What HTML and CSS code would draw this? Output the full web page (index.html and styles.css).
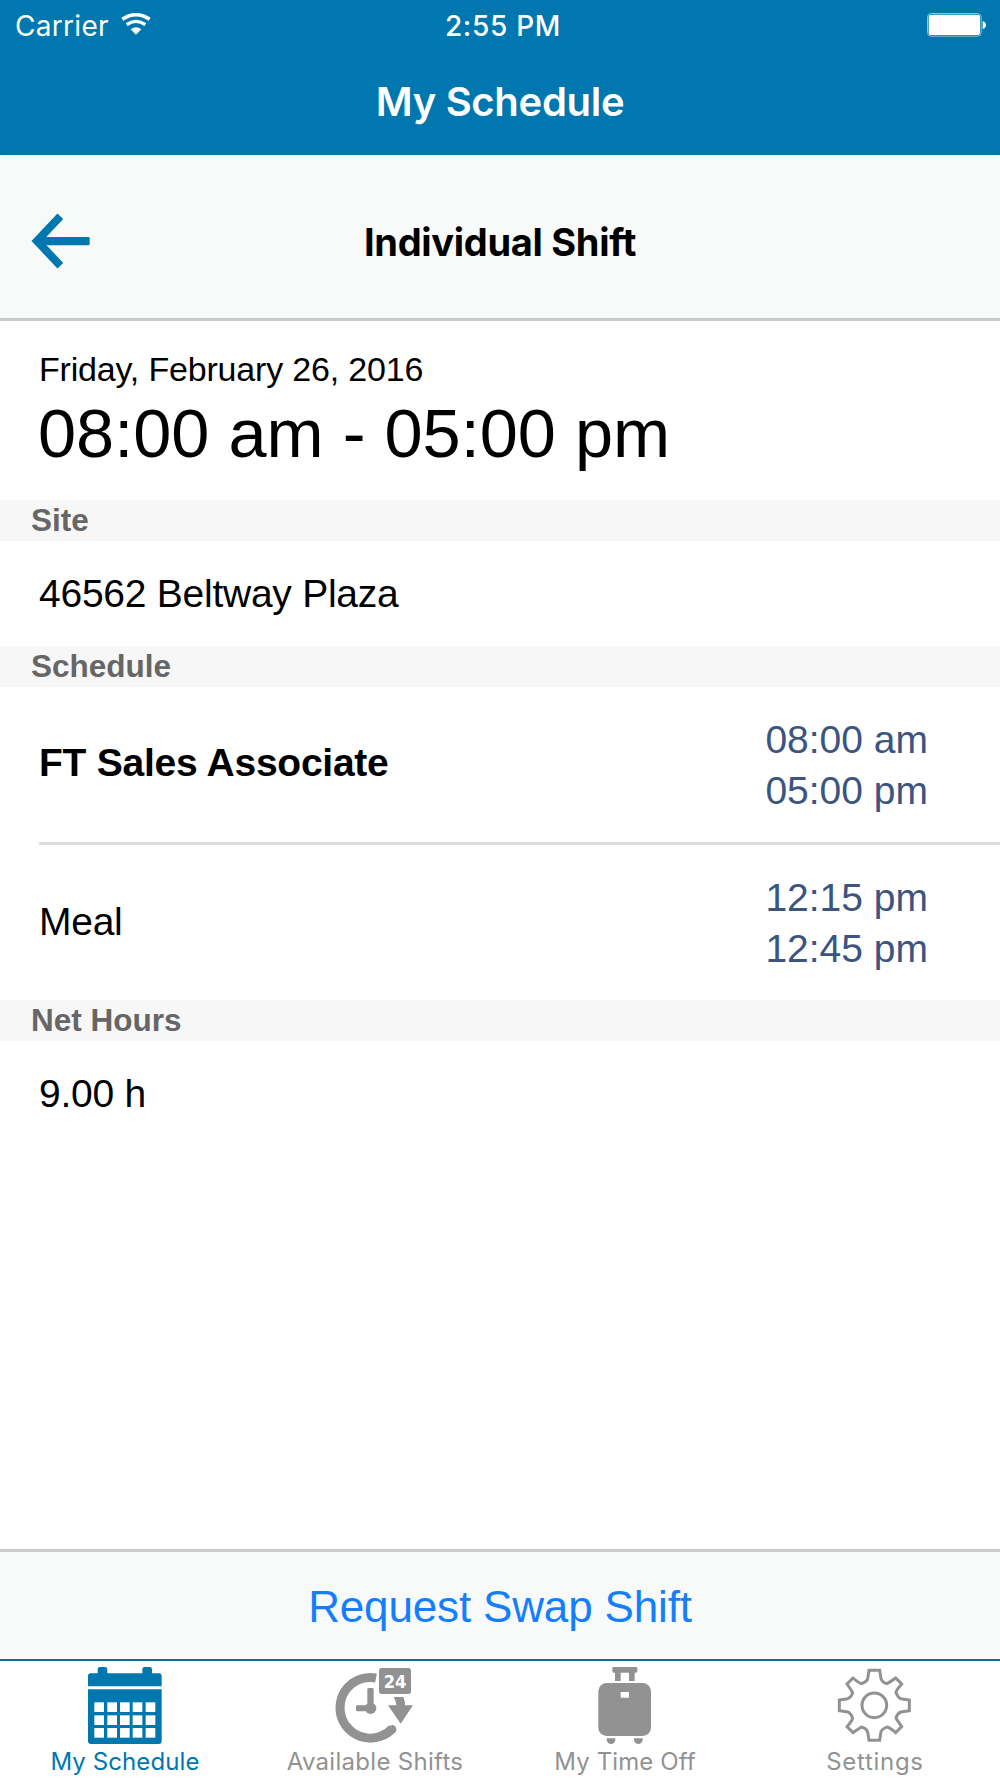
FILE: index.html
```html
<!DOCTYPE html>
<html lang="en">
<head>
    <meta charset="UTF-8">
    <meta name="viewport" content="width=device-width, initial-scale=1.0">
    <title>My Schedule</title>
    <link rel="stylesheet" href="styles.css">
</head>
<body>
    <div class="app">
        <div class="status-bar">
            <div class="status-left">
                <span class="carrier">Carrier</span>
                <svg class="wifi" viewBox="0 0 90 66">
                    <path d="M4 19 Q45 -9 86 19" fill="none" stroke="#fff" stroke-width="11"/>
                    <path d="M17 35 Q45 15 73 35" fill="none" stroke="#fff" stroke-width="10"/>
                    <path d="M29 49 Q45 36 61 49 L45 65 Z" fill="#fff"/>
                </svg>
            </div>
            <div class="status-time">2:55 PM</div>
            <div class="status-right">
                <svg class="battery" viewBox="0 0 180 72">
                    <rect x="1.5" y="1.5" width="161" height="68" rx="11" fill="none" stroke="#8fc3dc" stroke-width="3"/>
                    <rect x="5" y="5" width="154" height="61" rx="7" fill="#fff"/>
                    <path d="M167 24 Q177 27 177 36 Q177 45 167 48 Z" fill="#fff"/>
                </svg>
            </div>
        </div>
        <div class="title-bar">My Schedule</div>

        <div class="header-wrap">
            <div class="header">
                <div class="header-side">
                    <svg class="back" viewBox="90 636 186 174">
                        <path d="M181 649 L111 723 L181 797" fill="none" stroke="#0077ae" stroke-width="24"/>
                        <rect x="115" y="711" width="154" height="25" rx="4" fill="#0077ae"/>
                    </svg>
                </div>
                <div class="header-title">Individual Shift</div>
                <div class="header-side"></div>
            </div>
        </div>

        <div class="content">
            <div class="shift">
                <div class="shift-date">Friday, February 26, 2016</div>
                <div class="shift-time">08:00 am - 05:00 pm</div>
            </div>

            <div class="section">Site</div>
            <div class="row">
                <span class="site">46562 Beltway Plaza</span>
            </div>

            <div class="section">Schedule</div>
            <div class="row tall line">
                <span class="job">FT Sales Associate</span>
                <div class="times">
                    <div>08:00 am</div>
                    <div>05:00 pm</div>
                </div>
            </div>
            <div class="row tall">
                <span class="meal">Meal</span>
                <div class="times">
                    <div>12:15 pm</div>
                    <div>12:45 pm</div>
                </div>
            </div>

            <div class="section">Net Hours</div>
            <div class="row">
                <span class="hours">9.00 h</span>
            </div>
        </div>

        <div class="action"><span>Request Swap Shift</span></div>

        <div class="tabs">
            <div class="tab active">
                <svg class="icon" viewBox="249 63 252 252" fill="#0077ae">
                    <path d="M264 139 V108 Q264 100 272 100 H293 V88 Q293 81 300 81 H315 Q322 81 322 88 V100 H427 V88 Q427 81 434 81 H449 Q456 81 456 88 V100 H477 Q485 100 485 108 V139 Z"/>
                    <path d="M264 148 H485 V303 Q485 312 476 312 H273 Q264 312 264 303 Z"/>
                    <g fill="#fff">
                        <rect x="283" y="187" width="29" height="29"/>
                        <rect x="322" y="187" width="29" height="29"/>
                        <rect x="360" y="187" width="29" height="29"/>
                        <rect x="398" y="187" width="29" height="29"/>
                        <rect x="437" y="187" width="29" height="29"/>
                        <rect x="283" y="226" width="29" height="29"/>
                        <rect x="322" y="226" width="29" height="29"/>
                        <rect x="360" y="226" width="29" height="29"/>
                        <rect x="398" y="226" width="29" height="29"/>
                        <rect x="437" y="226" width="29" height="29"/>
                        <rect x="283" y="264" width="29" height="29"/>
                        <rect x="322" y="264" width="29" height="29"/>
                        <rect x="360" y="264" width="29" height="29"/>
                        <rect x="398" y="264" width="29" height="29"/>
                        <rect x="437" y="264" width="29" height="29"/>
                    </g>
                </svg>
                <span class="label-schedule">My Schedule</span>
            </div>
            <div class="tab">
                <svg class="icon" viewBox="249 63 252 252" fill="#929292">
                    <path d="M378 114 A91 91 0 1 0 428 265" fill="none" stroke="#929292" stroke-width="27"/>
                    <path d="M421 257 L427 254 Q441 259 439 272 L434 278 Z"/>
                    <rect x="352" y="144" width="19" height="60" rx="4"/>
                    <rect x="318" y="196" width="46" height="18" rx="4"/>
                    <circle cx="362" cy="205" r="17"/>
                    <path d="M431 171 H460 Q466 183 465 196 H489 L452 251 L414 196 H439 Q438 182 431 171 Z"/>
                    <rect x="387" y="84" width="96" height="78" rx="8"/>
                    <text class="badge" x="435" y="143" text-anchor="middle" textLength="68" lengthAdjust="spacingAndGlyphs">24</text>
                </svg>
                <span class="label-shifts">Available Shifts</span>
            </div>
            <div class="tab">
                <svg class="icon" viewBox="249 63 252 252" fill="#929292">
                    <path d="M341 81 H408 Q412 81 412 85 V94 Q412 98 408 98 H404 V123 H387 V98 H362 V123 H345 V98 H341 Q337 98 337 94 V85 Q337 81 341 81 Z"/>
                    <rect x="295" y="129" width="158" height="159" rx="25"/>
                    <rect x="362" y="156" width="25" height="17" rx="2" fill="#fff"/>
                    <path d="M320 295 H346 V300 Q343 312 333 312 Q323 312 320 300 Z"/>
                    <path d="M402 295 H428 V300 Q425 312 415 312 Q405 312 402 300 Z"/>
                </svg>
                <span class="label-timeoff">My Time Off</span>
            </div>
            <div class="tab">
                <svg class="icon" viewBox="249 63 252 252" fill="none" stroke="#929292" stroke-width="9">
                    <path id="cog" d="M374 91 H357 L353 117 Q351 124 335 131 Q327 130 309 114 L291 132 Q303 149 308 158 Q304 172 293 176 L268 180 V197"/>
                    <use href="#cog" transform="rotate(90 373 196)"/>
                    <use href="#cog" transform="rotate(180 373 196)"/>
                    <use href="#cog" transform="rotate(270 373 196)"/>
                    <circle cx="373" cy="196" r="37"/>
                </svg>
                <span class="label-settings">Settings</span>
            </div>
        </div>
    </div>
</body>
</html>
```
FILE: styles.css
```css
* {
    box-sizing: border-box;
}
body {
    margin: 0;
    background-color: #fff;
    font-family: "Liberation Sans", Arial, sans-serif;
    color: #000;
}
.app {
    width: 1000px;
    height: 1778px;
    display: flex;
    flex-direction: column;
    overflow: hidden;
    white-space: nowrap;
}
svg {
    display: block;
}

/* top bars */
.status-bar {
    display: flex;
    align-items: center;
    height: 50px;
    padding: 0 13px 0 15px;
    background-color: #0077ae;
    color: #fff;
    font-family: Inter, sans-serif;
    font-size: 28px;
}
.status-left,
.status-right {
    flex: 1;
    display: flex;
    align-items: center;
}
.status-left {
    gap: 12px;
}
.status-right {
    justify-content: flex-end;
}
.carrier {
    padding-top: 2px;
    letter-spacing: 0.3px;
}
.status-time {
    padding: 2px 0 0 4px;
    font-weight: 500;
    letter-spacing: 0.7px;
}
.wifi {
    width: 30px;
    height: 22px;
    margin-bottom: 2px;
}
.battery {
    width: 60px;
    height: 24px;
}
.title-bar {
    height: 105px;
    padding-bottom: 2px;
    background-color: #0077ae;
    color: #fff;
    font-family: Inter, sans-serif;
    font-size: 40px;
    font-weight: 600;
    line-height: 103px;
    letter-spacing: -0.3px;
    text-align: center;
}
.header-wrap {
    background-color: #fff;
}
.header {
    display: flex;
    align-items: center;
    height: 166px;
    padding: 9px 30px 0;
    background-color: #f8faf9;
    border-bottom: 3px solid #c8cccb;
    border-radius: 10px 10px 0 0;
}
.header-side {
    flex: 1;
}
.back {
    width: 62px;
    height: 58px;
}
.header-title {
    padding-top: 2px;
    font-family: Inter, sans-serif;
    font-size: 38px;
    font-weight: 700;
    letter-spacing: -0.3px;
}

/* shift details */
.content {
    flex: 1;
}
.shift {
    height: 179px;
    padding: 26px 39px 0 38px;
}
.shift-date {
    padding-left: 1px;
    font-size: 34px;
    line-height: 44px;
    letter-spacing: -0.18px;
}
.shift-time {
    font-size: 68.5px;
    line-height: 85px;
}
.section {
    height: 41px;
    padding-left: 31px;
    background-color: #f7f7f7;
    color: #666;
    font-size: 31.5px;
    font-weight: bold;
    line-height: 41px;
}
.row {
    display: flex;
    align-items: center;
    justify-content: space-between;
    height: 105px;
    margin-left: 39px;
    padding-right: 72px;
    font-size: 39px;
    letter-spacing: -0.25px;
}
.tall {
    height: 155px;
}
.line {
    height: 158px;
    border-bottom: 3px solid #dcdcdc;
}
.job {
    font-weight: bold;
    padding-bottom: 3px;
}
.meal {
    padding-bottom: 2px;
}
.times {
    color: #3b5480;
    line-height: 51px;
    letter-spacing: 0;
    text-align: right;
}

/* bottom */
.action {
    height: 110px;
    padding-top: 2px;
    background-color: #f8faf9;
    border-top: 3px solid #c8cccb;
    color: #157efb;
    font-size: 44px;
    line-height: 105px;
    letter-spacing: -0.15px;
    text-align: center;
}
.tabs {
    display: flex;
    height: 119px;
    border-top: 2px solid #0e6a97;
    background-color: #fff;
}
.tab {
    width: 25%;
    display: flex;
    flex-direction: column;
    align-items: center;
    color: #929292;
    font-family: Inter, sans-serif;
    font-size: 24px;
    line-height: 33px;
}
.active {
    color: #0077ae;
}
.icon {
    width: 84px;
    height: 84px;
}
.badge {
    fill: #fff;
    font-family: "DejaVu Sans", sans-serif;
    font-size: 54px;
    font-weight: bold;
}
.label-schedule,
.label-timeoff {
    letter-spacing: 0.1px;
}
.label-shifts {
    letter-spacing: 0.3px;
}
.label-settings {
    letter-spacing: 0.7px;
}
```
